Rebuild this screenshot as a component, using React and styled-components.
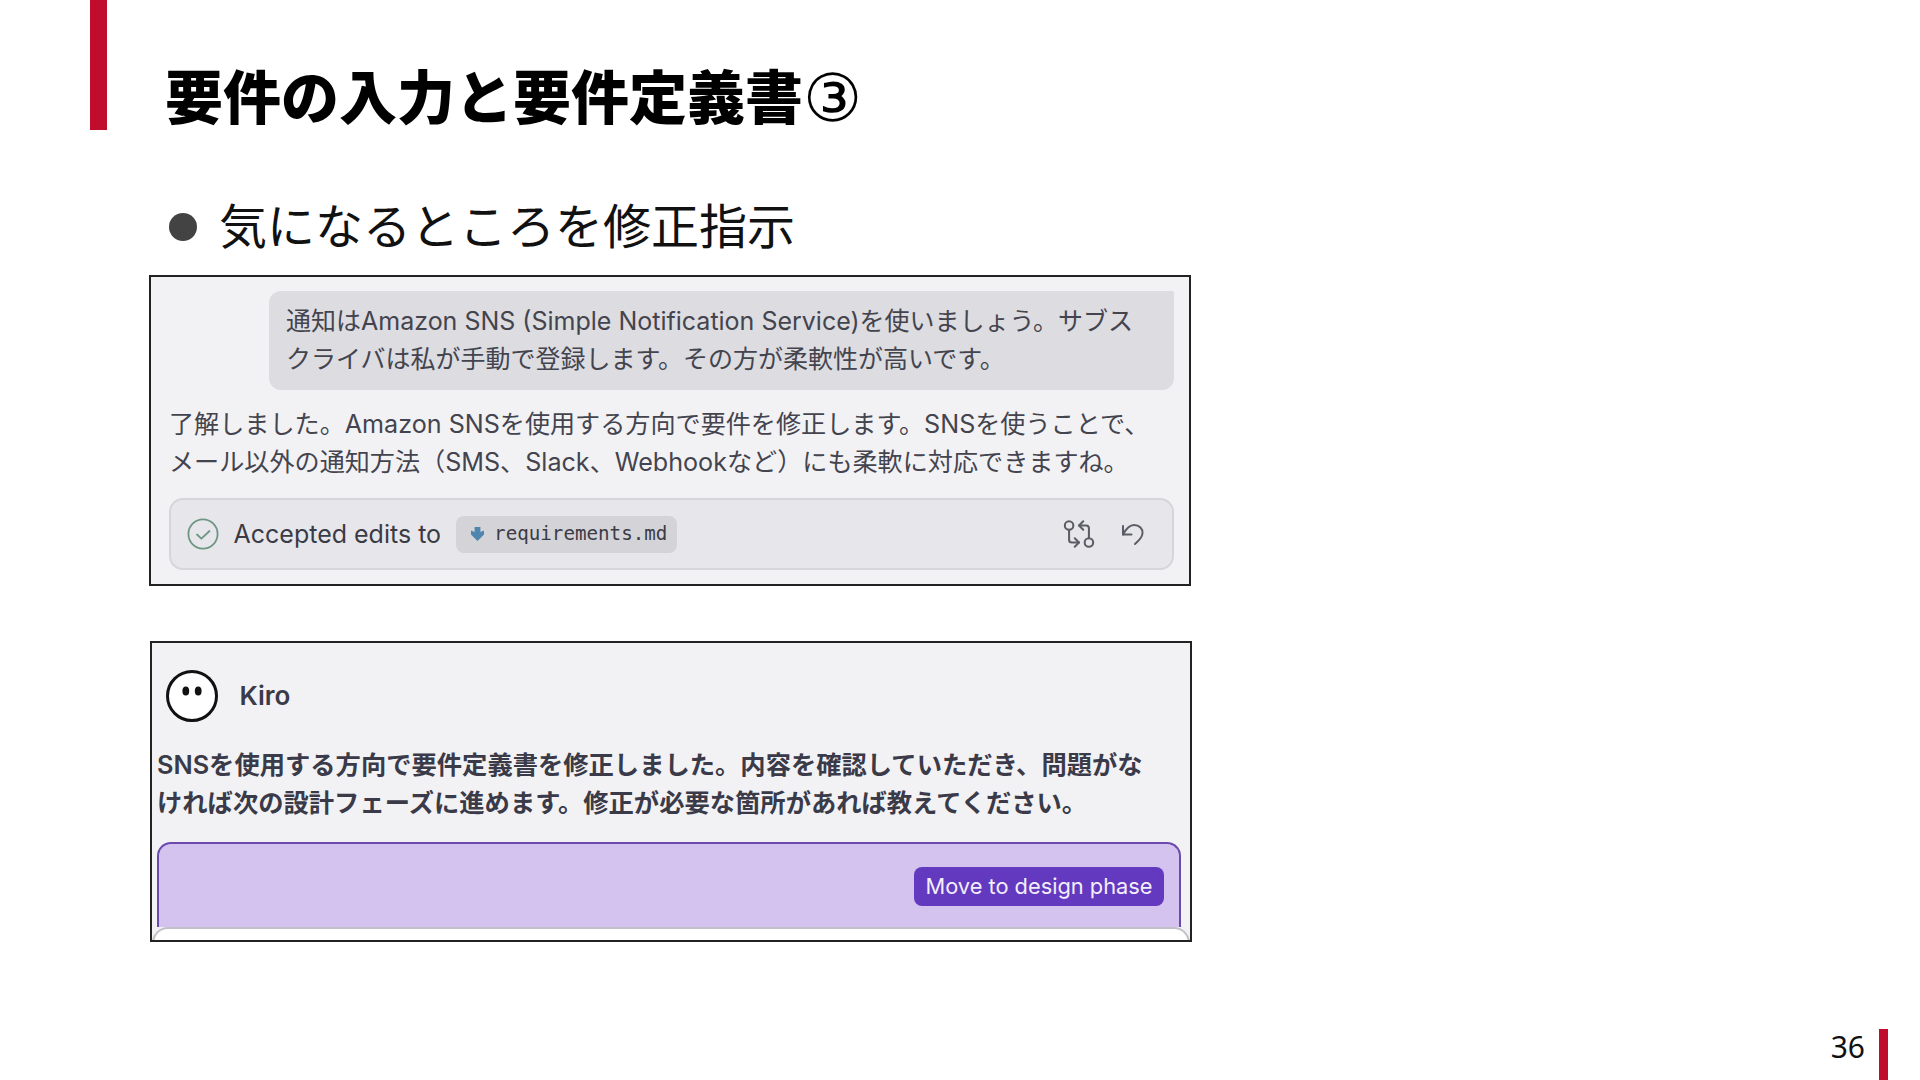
import React from 'react';
import styled, { createGlobalStyle } from 'styled-components';
import { GitCompareArrows } from 'lucide-react';

const GlobalStyle = createGlobalStyle`
  html, body {
    margin: 0;
    padding: 0;
    background: #fff;
  }
`;

const UI_FONT = `Inter, "Noto Sans CJK JP", sans-serif`;

function App() {
  return (
    <Slide>
      <GlobalStyle />
      <Header>
        <AccentBar />
        <Title>要件の入力と要件定義書<CircledDigit>③</CircledDigit></Title>
      </Header>

      <Bullet>
        <Dot />
        <BulletText>気になるところを修正指示</BulletText>
      </Bullet>

      <EditCard>
        <Bubble>
          通知はAmazon SNS (Simple Notification Service)を使いましょう。サブス<br />
          クライバは私が手動で登録します。その方が柔軟性が高いです。
        </Bubble>
        <Reply>
          了解しました。Amazon SNSを使用する方向で要件を修正します。SNSを使うことで、<br />
          メール以外の通知方法（SMS、Slack、Webhookなど）にも柔軟に対応できますね。
        </Reply>
        <AcceptedBar>
          <CheckIcon />
          <AcceptedText>Accepted edits to</AcceptedText>
          <FileChip>
            <FileIcon />
            requirements.md
          </FileChip>
          <BarActions>
            <GitCompareArrows size={34} strokeWidth={1.45} color="#5c5c66" />
            <UndoIcon />
          </BarActions>
        </AcceptedBar>
      </EditCard>

      <KiroCard>
        <KiroHead>
          <KiroAvatar />
          <KiroName>Kiro</KiroName>
        </KiroHead>
        <KiroMessage>
          SNSを使用する方向で要件定義書を修正しました。内容を確認していただき、問題がな<br />
          ければ次の設計フェーズに進めます。修正が必要な箇所があれば教えてください。
        </KiroMessage>
        <ActionPanel>
          <MoveButton>Move to design phase</MoveButton>
        </ActionPanel>
        <InputEdge />
      </KiroCard>

      <Footer>
        <PageNumber>36</PageNumber>
        <FooterBar />
      </Footer>
    </Slide>
  );
}

function CheckIcon() {
  return (
    <svg width="32" height="32" viewBox="0 0 32 32" fill="none" stroke="#6f9583" strokeWidth="1.8">
      <circle cx="16" cy="16" r="14.6" />
      <path d="M10 16.5l4.4 4.2L22.5 13" strokeLinecap="round" strokeLinejoin="round" />
    </svg>
  );
}

function FileIcon() {
  return (
    <svg width="13" height="14" viewBox="0 0 13 14">
      <path d="M3.6 0h5.800v5L13 3.500v4L6.500 14 0 7.500v-4l3.600 1.500z" fill="#4f86ad" />
    </svg>
  );
}

function UndoIcon() {
  return (
    <svg width="24" height="24" viewBox="0 0 24 24" fill="none" stroke="#5c5c66" strokeWidth="2" strokeLinecap="round" strokeLinejoin="round">
      <path d="M2 4v8.500h8.500" />
      <path d="M2 12.500C5 7 8 3 13 3c5.500 0 9 4 8.500 8.500C21.200 15 18 18.500 14 22" />
    </svg>
  );
}

function KiroAvatar() {
  return (
    <svg width="52" height="52" viewBox="0 0 52 52">
      <circle cx="26" cy="26" r="24.500" fill="#fff" stroke="#111" strokeWidth="3" />
      <ellipse cx="19.800" cy="21" rx="3.400" ry="4.600" fill="#111" />
      <ellipse cx="32.200" cy="21" rx="3.400" ry="4.600" fill="#111" />
    </svg>
  );
}

const Slide = styled.div`
  width: 1920px;
  height: 1080px;
  display: flex;
  flex-direction: column;
  overflow: hidden;
  background: #fff;
`;

const Header = styled.header`
  height: 130px;
  display: flex;
  padding-left: 90px;
  gap: 58px;
`;

const AccentBar = styled.div`
  width: 17px;
  background: #c00d2e;
`;

const Title = styled.h1`
  margin: 0;
  padding-top: 53px;
  font-family: "Noto Sans CJK JP", sans-serif;
  font-size: 58px;
  font-weight: 900;
  line-height: 82px;
  color: #000;
  white-space: nowrap;
`;

const CircledDigit = styled.span`
  font-family: "DejaVu Sans", sans-serif;
  font-size: 66px;
  font-weight: 400;
  line-height: 0;
  vertical-align: -2px;
`;

const Bullet = styled.div`
  box-sizing: border-box;
  height: 145px;
  display: flex;
  align-items: center;
  padding: 49px 0 0 169px;
  gap: 22px;
`;

const Dot = styled.div`
  width: 28px;
  height: 28px;
  border-radius: 50%;
  background: #434343;
`;

const BulletText = styled.div`
  margin-top: -8px;
  font-family: "Noto Sans CJK JP", sans-serif;
  font-size: 48px;
  font-weight: 400;
  line-height: 70px;
  color: #111;
  white-space: nowrap;
`;

const EditCard = styled.section`
  box-sizing: border-box;
  width: 1042px;
  height: 311px;
  margin-left: 149px;
  padding: 14px 15px 0 18px;
  display: flex;
  flex-direction: column;
  border: 2px solid #222;
  background: #f2f2f5;
  font-family: ${UI_FONT};
  font-size: 25px;
  color: #44444e;
`;

const Bubble = styled.div`
  box-sizing: border-box;
  align-self: flex-end;
  width: 905px;
  height: 99px;
  padding: 11px 17px 0;
  border-radius: 12px 2px 12px 12px;
  background: #dcdce1;
  line-height: 38px;
  white-space: nowrap;
`;

const Reply = styled.p`
  margin: 15px 0 17px;
  font-size: 25.12px;
  line-height: 38px;
  white-space: nowrap;
`;

const AcceptedBar = styled.div`
  box-sizing: border-box;
  height: 72px;
  display: flex;
  align-items: center;
  padding: 0 27px 0 16px;
  border: 2px solid #d6d6da;
  border-radius: 14px;
  background: #e7e7eb;
`;

const AcceptedText = styled.span`
  margin-left: 14.500px;
  color: #3b3b45;
  white-space: nowrap;
`;

const FileChip = styled.span`
  box-sizing: border-box;
  height: 37px;
  margin-left: 15px;
  padding: 0 10px 1px 15px;
  display: inline-flex;
  align-items: center;
  gap: 10px;
  border-radius: 8px;
  background: #d3d3d8;
  font-family: "DejaVu Sans Mono", monospace;
  font-size: 19.2px;
  color: #3b3b45;
`;

const BarActions = styled.div`
  margin-left: auto;
  display: flex;
  align-items: center;
  gap: 25px;
`;

const KiroCard = styled.section`
  box-sizing: border-box;
  width: 1042px;
  height: 301px;
  margin-left: 150px;
  margin-top: 55px;
  padding: 27px 9px 0 5px;
  border: 2px solid #222;
  background: #f2f2f5;
  overflow: hidden;
  font-family: ${UI_FONT};
  font-size: 25.3px;
  font-weight: 600;
  color: #3a3a48;
`;

const KiroHead = styled.div`
  display: flex;
  align-items: center;
  gap: 22px;
  padding-left: 8.500px;
`;

const KiroName = styled.span`
  font-size: 26px;
  line-height: 52px;
`;

const KiroMessage = styled.p`
  margin: 24px 0 20px;
  line-height: 38px;
  white-space: nowrap;
`;

const ActionPanel = styled.div`
  box-sizing: border-box;
  height: 85px;
  display: flex;
  justify-content: flex-end;
  align-items: flex-start;
  padding: 23px 15px 0 0;
  border: 2px solid #6a4aae;
  border-bottom: 0;
  border-radius: 14px 14px 0 0;
  background: #d4c3ef;
`;

const MoveButton = styled.button`
  width: 250px;
  height: 39px;
  padding: 0 0 2px;
  border: 0;
  border-radius: 8px;
  background: #6339bf;
  font-family: Inter, sans-serif;
  font-size: 21.8px;
  font-weight: 400;
  color: #f3eefc;
`;

const InputEdge = styled.div`
  height: 24px;
  margin: 0 -9px 0 -5px;
  border: 2px solid #c3bfc8;
  border-bottom: 0;
  border-radius: 16px 16px 0 0;
  background: #fff;
`;

const Footer = styled.footer`
  margin-top: auto;
  height: 51px;
  display: flex;
  justify-content: flex-end;
  padding-right: 32px;
  gap: 14px;
`;

const PageNumber = styled.span`
  font-family: "Noto Sans", sans-serif;
  font-size: 30px;
  line-height: 36px;
  color: #111;
`;

const FooterBar = styled.div`
  width: 9px;
  background: #c00d2e;
`;

export default App;
